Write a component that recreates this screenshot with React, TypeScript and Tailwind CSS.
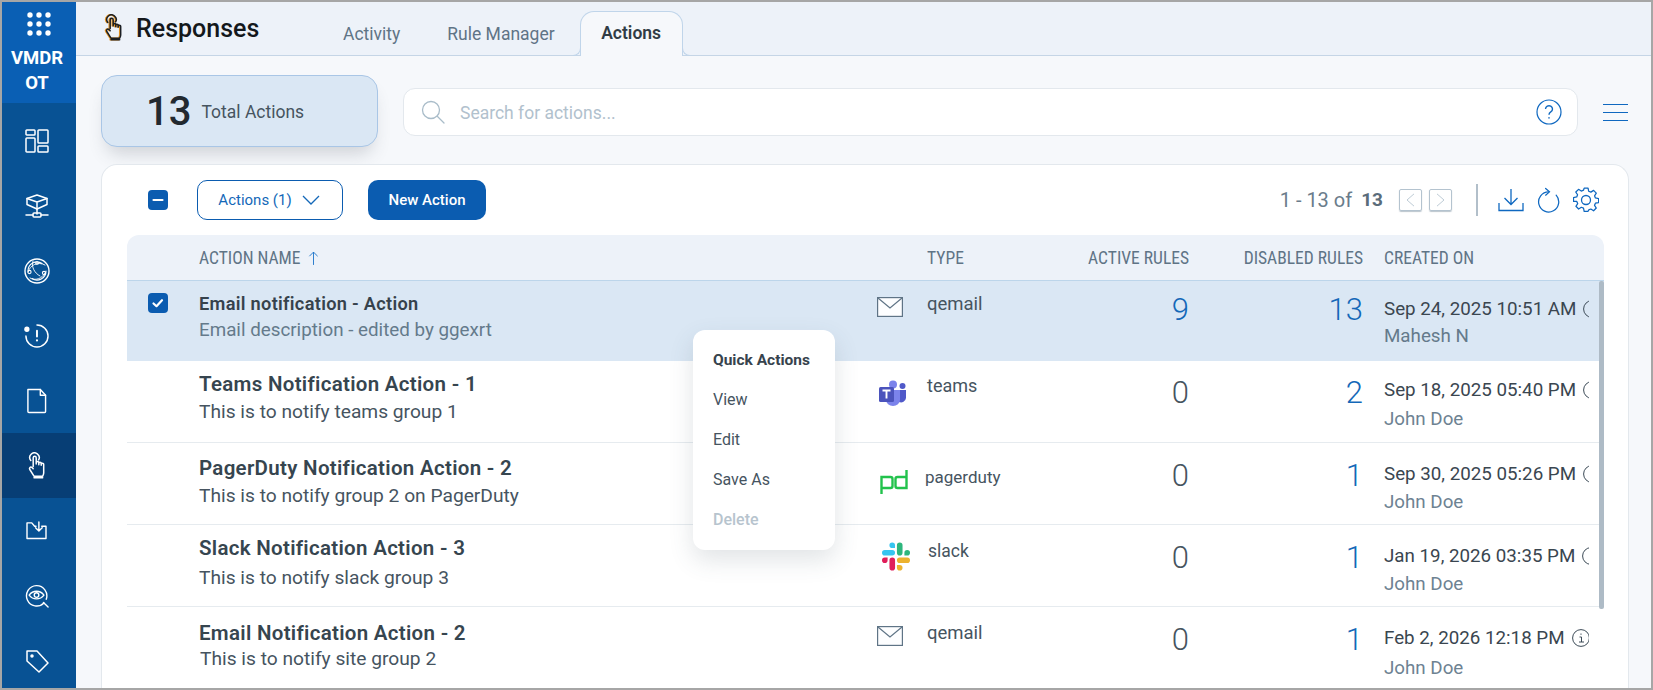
import React from "react";

const ic = { fill: "none", stroke: "currentColor", strokeWidth: 1.5, strokeLinecap: "round" as const, strokeLinejoin: "round" as const };

function Hand({ className }: { className?: string }) {
  return (
    <svg viewBox="0 0 18 27" className={className} {...ic} strokeWidth={1.5}>
      <path d="M2.800 8.500a4.700 4.700 0 1 1 7.800 -.6" />
      <path d="M5.200 14.500V5.800a1.500 1.500 0 0 1 3 0V12M8.200 10.800a1.300 1.300 0 0 1 2.600 0V12.800M10.800 11.500a1.200 1.200 0 0 1 2.400 0V13.200M13.200 12.400a1.200 1.200 0 0 1 2.500 0V21c0 1.200-.4 2-1 3.200H6L1.800 17.500c-1-1.600 .7-3.200 2-2.200l1.400 1.400" />
      <path d="M6 25.800h8.700" />
    </svg>
  );
}

const sideIcons: React.ReactNode[] = [
  <svg key="a" viewBox="0 0 24 24" className="w-[24px] h-[24px]" {...ic}>
    <rect x="1" y="1" width="9" height="5" rx=".8" /><rect x="13" y="1" width="10" height="13" rx=".8" /><rect x="1" y="9" width="9" height="14" rx=".8" /><rect x="13" y="17" width="10" height="6" rx=".8" />
  </svg>,
  <svg key="b" viewBox="0 0 24 24" className="w-[24px] h-[24px]" {...ic}>
    <path d="M12 1l10 3.500v6L12 15 2 10.500v-6z" /><path d="M2 4.500L12 8l10-3.500M12 8v7" /><path d="M12 15v5M1 21h7M16 21h7" /><rect x="8" y="19" width="8" height="4" rx="1" />
  </svg>,
  <svg key="c" viewBox="0 0 26 26" className="w-[26px] h-[26px]" {...ic} strokeWidth={1.1}>
    <circle cx="13" cy="13" r="12" strokeWidth={1.4} /><path d="M4 13a9 9 0 0 1 14-7.500M22 13a9 9 0 0 1-14 7.500" /><path d="M4 14c2-7 10-11 17-7M6 20c5 3 12 1 15-5M9 3c-2 5 1 12 7 15" strokeWidth={.9} /><circle cx="5.500" cy="14" r="1.600" /><circle cx="20" cy="15" r="1.600" /><circle cx="13" cy="5" r="1.300" />
  </svg>,
  <svg key="d" viewBox="0 0 26 26" className="w-[25px] h-[25px]" {...ic}>
    <path d="M13.500 2A11.500 11.500 0 1 1 2 13.500" /><circle cx="3" cy="6.500" r="2" fill="currentColor" /><path d="M13.500 8v6" strokeWidth={2} /><path d="M13.500 18v.1" strokeWidth={2.200} />
  </svg>,
  <svg key="e" viewBox="0 0 22 26" className="w-[21px] h-[26px]" {...ic}>
    <path d="M2 1h13l5.500 6v17a1 1 0 0 1-1 1H3a1 1 0 0 1-1-1z" /><path d="M15 1v6h5.500" />
  </svg>,
  <Hand key="f" className="w-[18px] h-[27px]" />,
  <svg key="g" viewBox="0 0 22 20" className="w-[21px] h-[19px]" {...ic}>
    <path d="M1 18.500V2h5l3 3.500h1.500M16.500 5.500H21v13H1" /><path d="M13.500 1v9M10 7l3.500 3.500L17 7" />
  </svg>,
  <svg key="h" viewBox="0 0 26 26" className="w-[24px] h-[24px]" {...ic}>
    <path d="M20.500 20.500a11 11 0 1 1 2.500-4" /><path d="M20 20l5 5" /><path d="M4.500 12c4-5.500 12-5.500 16 0-4 5.500-12 5.500-16 0z" /><circle cx="12.500" cy="12" r="2.500" />
  </svg>,
  <svg key="i" viewBox="0 0 24 24" className="w-[24px] h-[24px]" {...ic}>
    <path d="M2 2h10l11 12-9 9L2 12z" /><circle cx="7" cy="7" r="1" fill="currentColor" />
  </svg>,
];

function Mail({ className }: { className?: string }) {
  return (
    <svg viewBox="0 0 26 20" className={className}>
      <rect x=".6" y=".6" width="24.800" height="18.800" fill="#fdfeff" stroke="#5f7486" strokeWidth="1.200" />
      <path d="M1 1l12 10L25 1" fill="none" stroke="#5f7486" strokeWidth="1.200" />
    </svg>
  );
}
function Teams({ className }: { className?: string }) {
  return (
    <svg viewBox="0 0 28 26" className={className}>
      <circle cx="14" cy="4.500" r="4" fill="#7b83eb" />
      <circle cx="23.500" cy="6" r="3" fill="#5059c9" />
      <path d="M18 10h9v8a5 5 0 0 1-7 4z" fill="#5059c9" />
      <path d="M7 10h14v10a7 6 0 0 1-14 0z" fill="#7b83eb" />
      <rect x="0" y="7" width="15" height="15" rx="1.500" fill="#4b53bc" />
      <path d="M3.500 10.500h8M7.500 10.500v8" stroke="#fff" strokeWidth="1.900" fill="none" />
    </svg>
  );
}
function Pd({ className }: { className?: string }) {
  return (
    <svg viewBox="0 0 28 26" className={className} fill="none" stroke="#22c24c" strokeWidth="2.400">
      <path d="M1.500 25V8h9a2 2 0 0 1 2 2v7a2 2 0 0 1-2 2h-9" />
      <path d="M26.500 1v18h-9a2 2 0 0 1-2-2v-7a2 2 0 0 1 2-2h9" />
    </svg>
  );
}
function Slack({ className }: { className?: string }) {
  return (
    <svg viewBox="0 0 54 54" className={className}>
      <path fill="#36c5f0" d="M19.700 0a5.400 5.400 0 0 0 0 10.800h5.400V5.400A5.400 5.400 0 0 0 19.700 0M19.700 14.400H5.400a5.400 5.400 0 0 0 0 10.800h14.300a5.400 5.400 0 0 0 0-10.800" />
      <path fill="#2eb67d" d="M54 19.800a5.400 5.400 0 0 0-10.800 0v5.400h5.400a5.400 5.400 0 0 0 5.400-5.400M39.600 19.800V5.400a5.400 5.400 0 0 0-10.800 0v14.400a5.400 5.400 0 0 0 10.800 0" />
      <path fill="#ecb22e" d="M34.200 54a5.400 5.400 0 0 0 0-10.800h-5.400v5.400a5.400 5.400 0 0 0 5.400 5.400M34.200 39.600h14.400a5.400 5.400 0 0 0 0-10.800H34.200a5.400 5.400 0 0 0 0 10.800" />
      <path fill="#e01e5a" d="M0 34.200a5.400 5.400 0 0 0 10.800 0v-5.400H5.400A5.400 5.400 0 0 0 0 34.200M14.400 34.200v14.400a5.400 5.400 0 0 0 10.800 0V34.200a5.400 5.400 0 0 0-10.800 0" />
    </svg>
  );
}

function Info() {
  return (
    <svg viewBox="0 0 18 18" className="w-[18px] h-[18px] shrink-0" fill="none" stroke="#3c4b57" strokeWidth="1">
      <circle cx="9" cy="9" r="8.400" />
      <path d="M7.500 8h2v5M7 13h5M9 4.500v1.300" />
    </svg>
  );
}

function Check({ minus }: { minus?: boolean }) {
  return (
    <span className="flex h-[20px] w-[20px] items-center justify-center rounded-[4px] bg-[#0b5cb0]">
      <svg viewBox="0 0 20 20" className="h-[20px] w-[20px]" fill="none" stroke="#fff" strokeWidth="2.200" strokeLinecap="round" strokeLinejoin="round">
        {minus ? <path d="M5.500 10h9" /> : <path d="M5.500 10.500l3 2.700 5.500-6" />}
      </svg>
    </span>
  );
}

type Row = {
  icon: React.ReactNode; name: string; desc: string; type: string; active: string; disabled: string; date: string; by: string;
  nameCls: string; descCls: string; iconCls: string; typeCls: string; numCls: string; dateCls: string; byCls: string; rowCls: string; byColor: string; activeColor: string;
};

const rows: Row[] = [
  {
    icon: <Mail className="w-[26px] h-[20px]" />, name: "Email notification - Action", desc: "Email description - edited by ggexrt", type: "qemail", active: "9", disabled: "13", date: "Sep 24, 2025 10:51 AM", by: "Mahesh N",
    nameCls: "pt-[11px] text-[18.200px] tracking-[0.3px] font-semibold text-[#36424c]", descCls: "mt-[2px] text-[18.800px] text-[#647a8b]", iconCls: "pt-[16px] pl-0", typeCls: "pt-[11px] text-[18.500px]", numCls: "pt-[13px]", dateCls: "pt-[17px]", byCls: "mt-[5px]", rowCls: "h-[80px] bg-[#dae7f4] border-[#dae7f4]", byColor: "text-[#647a8b]", activeColor: "text-[#1468b8]",
  },
  {
    icon: <Teams className="w-[28px] h-[26px]" />, name: "Teams Notification Action - 1", desc: "This is to notify teams group 1", type: "teams", active: "0", disabled: "2", date: "Sep 18, 2025 05:40 PM", by: "John Doe",
    nameCls: "pt-[11px] text-[20.500px] tracking-[0.3px] font-semibold text-[#36454f]", descCls: "mt-[4px] text-[19.200px] text-[#46545f]", iconCls: "pt-[19px] pl-[2px]", typeCls: "pt-[13px] text-[18px]", numCls: "pt-[16px]", dateCls: "pt-[18px]", byCls: "mt-[7px]", rowCls: "h-[82px] border-[#e6ebef]", byColor: "text-[#6d8292]", activeColor: "text-[#46545f]",
  },
  {
    icon: <Pd className="w-[28px] h-[26px]" />, name: "PagerDuty Notification Action - 2", desc: "This is to notify group 2 on PagerDuty", type: "pagerduty", active: "0", disabled: "1", date: "Sep 30, 2025 05:26 PM", by: "John Doe",
    nameCls: "pt-[13px] text-[20.500px] tracking-[0.3px] font-semibold text-[#36454f]", descCls: "mt-[4px] text-[19.200px] text-[#46545f]", iconCls: "pt-[26px] pl-[3px]", typeCls: "pt-[22px] -ml-[2px] text-[17px]", numCls: "pt-[17px]", dateCls: "pt-[20px]", byCls: "mt-[6px]", rowCls: "h-[82px] border-[#e6ebef]", byColor: "text-[#6d8292]", activeColor: "text-[#46545f]",
  },
  {
    icon: <Slack className="w-[28px] h-[29px]" />, name: "Slack Notification Action - 3", desc: "This is to notify slack group 3", type: "slack", active: "0", disabled: "1", date: "Jan 19, 2026 03:35 PM", by: "John Doe",
    nameCls: "pt-[11px] text-[20.500px] tracking-[0.3px] font-semibold text-[#36454f]", descCls: "mt-[6px] text-[19.200px] text-[#46545f]", iconCls: "pt-[17px] pl-[5px]", typeCls: "pt-[14px] ml-[1px] text-[17.500px]", numCls: "pt-[17px]", dateCls: "pt-[20px]", byCls: "mt-[6px]", rowCls: "h-[82px] border-[#e6ebef]", byColor: "text-[#6d8292]", activeColor: "text-[#46545f]",
  },
  {
    icon: <Mail className="w-[26px] h-[20px]" />, name: "Email Notification Action - 2", desc: "This is to notify site group 2", type: "qemail", active: "0", disabled: "1", date: "Feb 2, 2026 12:18 PM", by: "John Doe",
    nameCls: "pt-[14px] text-[20.500px] tracking-[0.3px] font-semibold text-[#36454f]", descCls: "mt-[2px] ml-[1px] text-[19.200px] text-[#46545f]", iconCls: "pt-[19px] pl-0", typeCls: "pt-[14px] text-[18.500px]", numCls: "pt-[17px]", dateCls: "pt-[20px]", byCls: "mt-[8px]", rowCls: "h-[82px] border-transparent", byColor: "text-[#6d8292]", activeColor: "text-[#46545f]",
  },
];

const gridCols = "grid grid-cols-[72px_678px_50px_170px_92px_174px_21px_205px]";

export default function App() {
  return (
    <div className="relative flex h-[690px] w-[1653px] overflow-hidden border-2 border-[#a6a6a6] bg-[#f6f8fb] font-['Roboto',sans-serif]">
      {/* Sidebar */}
      <aside className="flex w-[74px] shrink-0 flex-col overflow-hidden bg-[#085294] text-white">
        <div className="flex h-[101px] shrink-0 flex-col items-center bg-[#0a5fb4] pt-[10px]">
          <svg viewBox="0 0 24 24" className="h-[24px] w-[24px]" fill="#fff">
            {[3, 12, 21].flatMap((y) => [3, 12, 21].map((x) => <circle key={`${x}${y}`} cx={x} cy={y} r="2.700" />))}
          </svg>
          <div className="mt-[10px] -ml-[4px] text-center text-[18.500px] font-bold leading-[25px]">VMDR<br />OT</div>
        </div>
        <div className="mt-[5px] flex flex-col">
          {sideIcons.map((node, i) => (
            <div key={i} className={`flex h-[65px] shrink-0 items-center justify-center pr-[5px] ${i === 5 ? "bg-[#073e75]" : ""}`}>{node}</div>
          ))}
        </div>
      </aside>

      <div className="relative flex min-w-0 flex-1 flex-col">
        {/* Header */}
        <header className="relative flex h-[54px] shrink-0 items-end border-b border-[#c5d5e6] bg-[#edf2f9]">
          <Hand className="absolute left-[29px] top-[12px] h-[27px] w-[18px] text-[#1b1f24] [filter:drop-shadow(-0.7px_0_0_#e8941f)]" />
          <h1 className="absolute left-[60px] top-[12px] text-[25px] font-medium leading-[30px] text-[#14181c]">Responses</h1>
          <nav className="ml-[267px] flex h-[44px] items-end">
            <span className="mb-[9px] text-[17.500px] leading-[24px] text-[#5f7486]">Activity</span>
            <span className="mb-[9px] ml-[47px] text-[17.500px] leading-[24px] text-[#5f7486]">Rule Manager</span>
            <span className="relative -mb-px ml-[25px] flex h-[45px] w-[103px] items-start justify-center rounded-t-[14px] border border-b-0 border-[#c0d5ea] bg-[#f6f8fb] pt-[9px] text-[17.500px] font-semibold leading-[24px] text-[#313c45]">
              Actions
              <span className="absolute -left-[8px] bottom-0 h-[8px] w-[8px] rounded-br-[8px] border-b border-r border-[#c0d5ea]" />
              <span className="absolute -right-[8px] bottom-0 h-[8px] w-[8px] rounded-bl-[8px] border-b border-l border-[#c0d5ea]" />
            </span>
          </nav>
        </header>

        {/* Summary row */}
        <div className="flex shrink-0 items-start pl-[25px] pt-[19px]">
          <div className="flex h-[72px] w-[277px] shrink-0 items-center rounded-[16px] border border-[#a9c6e6] bg-[#dae7f4] pl-[44px] shadow-[0_12px_18px_-6px_rgba(60,70,80,0.22)]">
            <span className="pt-[1px] text-[40px] font-medium leading-none text-[#22292f]">13</span>
            <span className="ml-[10px] pt-[3px] text-[17.500px] text-[#46545f]">Total Actions</span>
          </div>
          <div className="ml-[25px] mt-[13px] flex h-[48px] w-[1175px] items-center rounded-[12px] border border-[#e3e8ed] bg-white pl-[17px] pr-[15px]">
            <svg viewBox="0 0 24 24" className="h-[24px] w-[24px]" fill="none" stroke="#a9bcc9" strokeWidth="1.300" strokeLinecap="round">
              <circle cx="10" cy="10" r="8.500" /><path d="M16.500 16.500l6.500 6.500" />
            </svg>
            <span className="ml-[15px] flex-1 pt-[2px] text-[17.500px] text-[#b1c1cd]">Search for actions...</span>
            <svg viewBox="0 0 26 26" className="h-[26px] w-[26px]" fill="none" stroke="#0f68c0" strokeWidth="1.200">
              <circle cx="13" cy="13" r="12" />
              <path d="M9.500 10a3.500 3.300 0 1 1 5.300 2.900c-1.300.8-1.800 1.400-1.800 2.800" strokeWidth="1.400" /><path d="M13 18.300v1.200" strokeWidth="1.600" />
            </svg>
          </div>
          <div className="ml-[25px] mt-[29px] flex w-[25px] flex-col gap-[7px]">
            <span className="h-px bg-[#0f68c0]" /><span className="h-px bg-[#0f68c0]" /><span className="h-px bg-[#0f68c0]" />
          </div>
        </div>

        {/* Panel */}
        <section className="relative ml-[25px] mt-[17px] flex w-[1528px] min-h-0 flex-1 flex-col overflow-hidden rounded-t-[16px] border border-b-0 border-[#e3e8ed] bg-white">
          <div className="flex h-[70px] shrink-0 items-start pl-[46px] pt-[15px]">
            <span className="mt-[10px]"><Check minus /></span>
            <button className="ml-[29px] flex h-[40px] w-[146px] items-center justify-center gap-[10px] rounded-[10px] border border-[#0b5cb0] pr-[2px] text-[15px] text-[#1468b8]">
              Actions (1)
              <svg viewBox="0 0 18 10" className="h-[10px] w-[18px]" fill="none" stroke="#1468b8" strokeWidth="1.300"><path d="M1 1l8 8 8-8" /></svg>
            </button>
            <button className="ml-[25px] h-[40px] w-[118px] rounded-[10px] bg-[#0b5cb0] text-[15px] font-medium text-white">New Action</button>
            <div className="ml-auto flex h-[40px] items-center pr-[29px] text-[#5f7486]">
              <span className="text-[20px] text-[#6a7c8b]">1 - 13 of</span>
              <span className="ml-[9px] text-[19px] font-bold text-[#5a6c7a]">13</span>
              <span className="ml-[16px] flex h-[22px] w-[23px] items-center justify-center rounded-[2px] border border-[#b4c3cf] shadow-[0_1px_1px_rgba(120,140,155,0.5)]">
                <svg viewBox="0 0 10 16" className="h-[14px] w-[9px]" fill="none" stroke="#b4c3cf"><path d="M9 1L1 8l8 7" /></svg>
              </span>
              <span className="ml-[7px] flex h-[22px] w-[23px] items-center justify-center rounded-[2px] border border-[#b4c3cf] shadow-[0_1px_1px_rgba(120,140,155,0.5)]">
                <svg viewBox="0 0 10 16" className="h-[14px] w-[9px]" fill="none" stroke="#b4c3cf"><path d="M1 1l8 7-8 7" /></svg>
              </span>
              <span className="ml-[24px] h-[32px] w-[2px] bg-[#b2bfca]" />
              <svg viewBox="0 0 26 24" className="ml-[20px] h-[24px] w-[26px]" fill="none" stroke="#0f68c0" strokeWidth="1.300">
                <path d="M13 1v15M6.500 10l6.500 6.500 6.500-6.500M1 15v7.500h24V15" />
              </svg>
              <svg viewBox="0 0 24 26" className="ml-[13px] h-[26px] w-[23px]" fill="none" stroke="#0f68c0" strokeWidth="1.300" strokeLinecap="round">
                <path d="M12 4.500A10.500 10.500 0 1 0 20 8" /><path d="M9 1l4 3.500L9 8" />
              </svg>
              <svg viewBox="0 0 26 26" className="ml-[13px] h-[26px] w-[26px]" fill="none" stroke="#0f68c0" strokeWidth="1.300" strokeLinejoin="round">
                <circle cx="13" cy="13" r="4.500" />
                <path d="M11 1h4l.7 3.300 2.200.9 2.800-1.800 2.800 2.800-1.800 2.800.9 2.200 3.300.7v4l-3.300.7-.9 2.200 1.800 2.800-2.800 2.800-2.800-1.800-2.200.9L15 25h-4l-.7-3.300-2.200-.9-2.800 1.800-2.800-2.800 1.800-2.800-.9-2.200L0 14.800v-4l3.300-.7.900-2.200L2.400 5.100l2.800-2.800L8 4.100l2.300-.9z" transform="translate(.5 .1) scale(.97)" />
              </svg>
            </div>
          </div>

          {/* Table */}
          <div className="relative ml-[25px] w-[1477px] flex-1">
            <div className={`${gridCols} h-[46px] rounded-t-[12px] border-b border-[#bcd5ea] bg-[#edf2f9] text-[17.500px] leading-[46px] text-[#5f7486] [font-stretch:75%]`}>
              <span />
              <span className="flex items-center gap-[7px]">ACTION NAME
                <svg viewBox="0 0 12 16" className="h-[15px] w-[11px]" fill="none" stroke="#1c74c9" strokeWidth="1"><path d="M6 15V1M1.500 5.500L6 1l4.500 4.500" /></svg>
              </span>
              <span />
              <span>TYPE</span>
              <span className="flex justify-end whitespace-nowrap">ACTIVE RULES</span>
              <span className="flex justify-end whitespace-nowrap">DISABLED RULES</span>
              <span />
              <span>CREATED ON</span>
            </div>
            {rows.map((r, i) => (
              <div key={i} className={`${gridCols} border-b ${r.rowCls}`}>
                <div className="pl-[21px] pt-[12px]">{i === 0 && <Check />}</div>
                <div className={r.nameCls}>
                  <div className="leading-[24px] whitespace-nowrap">{r.name}</div>
                  <div className={`tracking-normal font-normal leading-[24px] whitespace-nowrap ${r.descCls}`}>{r.desc}</div>
                </div>
                <div className={r.iconCls}>{r.icon}</div>
                <div className={`leading-[24px] text-[#46545f] ${r.typeCls}`}>{r.type}</div>
                <div className={`text-right text-[31px] font-light leading-[32px] ${r.activeColor} ${r.numCls}`}>{r.active}</div>
                <div className={`text-right text-[31px] font-light leading-[32px] text-[#1468b8] ${r.numCls}`}>{r.disabled}</div>
                <div />
                <div className={`overflow-hidden whitespace-nowrap text-[18.750px] leading-[22px] ${r.dateCls}`}>
                  <div className="flex items-center gap-[7px] text-[#3a4650]">{r.date}<Info /></div>
                  <div className={`${r.byCls} ${r.byColor}`}>{r.by}</div>
                </div>
              </div>
            ))}
            <span className="absolute right-0 top-[46px] h-[328px] w-[5px] rounded-[2px] bg-[#aebbc6]" />
          </div>
        </section>

        {/* Quick actions menu */}
        <div className="absolute left-[617px] top-[328px] flex h-[220px] w-[142px] flex-col rounded-[12px] bg-white pl-[20px] pt-[10px] text-[16px] leading-[40px] text-[#46545f] shadow-[0_10px_24px_rgba(70,85,100,0.16)]">
          <span className="text-[15.500px] font-bold text-[#37434d]">Quick Actions</span>
          <span>View</span>
          <span>Edit</span>
          <span>Save As</span>
          <span className="font-medium text-[#b7c4ce]">Delete</span>
        </div>
      </div>
    </div>
  );
}
